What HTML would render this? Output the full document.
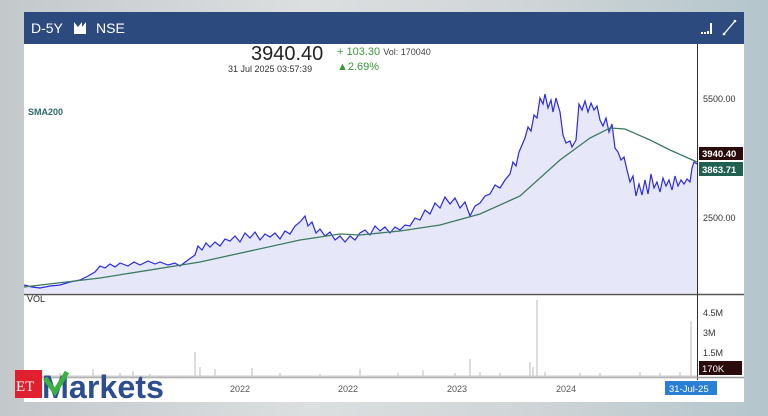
<!DOCTYPE html>
<html><head><style>
body{margin:0;width:768px;height:416px;overflow:hidden;background:linear-gradient(90deg,#c3c8cb,#dcdfe0 40%,#cfd4d6 70%,#b3c6cc);font-family:"Liberation Sans",sans-serif;position:relative}
.panel{position:absolute;left:24px;top:12px;width:720px;height:390px;background:#fff}
.hdr{position:absolute;left:0;top:0;width:720px;height:32px;background:#2c4a7e;color:#fff;font-size:14px}
.t{position:absolute;white-space:nowrap}
</style></head><body>
<div class="panel">
<div class="hdr">
<span class="t" style="left:7px;top:8px">D-5Y</span>
<svg class="t" style="left:49px;top:9px" width="14" height="14"><path d="M1 13V1l4 5 4-5v5l4-5v12z" fill="#fff"/></svg>
<span class="t" style="left:72px;top:8px">NSE</span>
<svg class="t" style="left:675px;top:8px" width="16" height="16"><rect x="2" y="12" width="2" height="2" fill="#fff"/><rect x="5" y="12" width="2" height="2" fill="#fff"/><rect x="8" y="11" width="2" height="3" fill="#fff"/><rect x="11" y="3" width="2" height="11" fill="#fff"/></svg>
<svg class="t" style="left:698px;top:6px" width="16" height="18"><path d="M2 16L13 3" stroke="#fff" stroke-width="1.3"/><circle cx="2" cy="16" r="1.3" fill="#fff"/><circle cx="13" cy="3" r="1.3" fill="#fff"/></svg>
</div>
<span class="t" style="left:227px;top:31px;font-size:20px;color:#222">3940.40</span>
<span class="t" style="left:204px;top:52px;font-size:9px;color:#333">31 Jul 2025 03:57:39</span>
<span class="t" style="left:313px;top:34px;font-size:11px;color:#3a9a3a">+ 103.30 <span style="color:#444;font-size:9px">Vol: 170040</span></span>
<span class="t" style="left:313px;top:49px;font-size:11px;color:#3a9a3a">▲2.69%</span>
<span class="t" style="left:4px;top:95px;font-size:9px;color:#2a6a6a;font-weight:bold">SMA200</span>
<span class="t" style="left:3px;top:282px;font-size:9px;color:#222">VOL</span>
</div>
<svg style="position:absolute;left:0;top:0" width="768" height="416">
<defs><polyline id="pl" points="24,285 32,287 40,288 50,286 60,285 70,282 80,280 88,276 95,272 100,266 105,268 110,264 115,267 120,263 128,266 134,262 140,265 148,261 155,264 160,262 168,265 175,263 180,266 188,260 195,255 198,246 202,250 206,243 210,247 215,242 220,246 225,239 230,241 235,236 240,242 245,233 250,238 255,232 260,240 265,234 270,237 275,233 280,239 285,231 290,234 295,226 300,222 305,216 308,226 312,222 316,233 320,229 325,236 330,232 335,240 340,236 345,242 350,236 355,240 360,233 365,230 370,235 375,226 380,231 385,227 390,233 395,227 400,230 405,225 410,226 415,218 420,220 425,210 430,214 435,203 440,208 445,197 450,204 455,198 460,208 465,202 470,216 475,206 480,203 485,196 490,194 495,185 500,188 505,180 510,174 513,162 516,166 519,152 522,145 525,138 528,127 531,131 534,115 537,118 540,98 543,104 545,94 548,108 551,100 553,112 556,98 560,112 563,135 566,143 570,141 572,147 576,140 579,104 582,110 585,101 588,112 591,103 594,110 597,106 600,120 603,126 606,118 609,132 612,124 615,148 618,152 621,160 624,157 627,170 630,182 633,176 636,196 639,184 642,195 645,180 648,194 651,174 654,188 657,182 660,192 663,178 666,186 669,180 672,190 675,176 678,186 681,180 684,184 687,179 690,182 692,168 694,162 697,164"/></defs>
<polygon fill="#e6e7f8" points="24,285 32,287 40,288 50,286 60,285 70,282 80,280 88,276 95,272 100,266 105,268 110,264 115,267 120,263 128,266 134,262 140,265 148,261 155,264 160,262 168,265 175,263 180,266 188,260 195,255 198,246 202,250 206,243 210,247 215,242 220,246 225,239 230,241 235,236 240,242 245,233 250,238 255,232 260,240 265,234 270,237 275,233 280,239 285,231 290,234 295,226 300,222 305,216 308,226 312,222 316,233 320,229 325,236 330,232 335,240 340,236 345,242 350,236 355,240 360,233 365,230 370,235 375,226 380,231 385,227 390,233 395,227 400,230 405,225 410,226 415,218 420,220 425,210 430,214 435,203 440,208 445,197 450,204 455,198 460,208 465,202 470,216 475,206 480,203 485,196 490,194 495,185 500,188 505,180 510,174 513,162 516,166 519,152 522,145 525,138 528,127 531,131 534,115 537,118 540,98 543,104 545,94 548,108 551,100 553,112 556,98 560,112 563,135 566,143 570,141 572,147 576,140 579,104 582,110 585,101 588,112 591,103 594,110 597,106 600,120 603,126 606,118 609,132 612,124 615,148 618,152 621,160 624,157 627,170 630,182 633,176 636,196 639,184 642,195 645,180 648,194 651,174 654,188 657,182 660,192 663,178 666,186 669,180 672,190 675,176 678,186 681,180 684,184 687,179 690,182 692,168 694,162 697,164 697,293 24,293"/>
<use href="#pl" fill="none" stroke="#2a2ae8" stroke-width="1.2"/>
<polyline fill="none" stroke="#3c7a60" stroke-width="1.3" points="24,287 100,278 200,262 300,240 340,234 360,235 400,231 440,225 480,214 520,196 560,160 590,138 610,128 625,129 650,140 670,150 697,162"/>
<line x1="24" y1="294.5" x2="744" y2="294.5" stroke="#555" stroke-width="1.5"/>
<line x1="697.5" y1="44" x2="697.5" y2="380" stroke="#333"/>
<line x1="24" y1="377.5" x2="744" y2="377.5" stroke="#999" stroke-width="1.5"/>
<g stroke="#bbb" stroke-width="1">
<path d="M30 377v-3M60 377v-4M93 377v-8M120 377v-4M133 377v-6M150 377v-3M195 377v-25M200 377v-10M215 377v-8M252 377v-9M280 377v-4M320 377v-3M360 377v-8M398 377v-4M423 377v-7M455 377v-4M470 377v-18M480 377v-5M500 377v-4M530 377v-15M533 377v-10M537 377v-77M545 377v-5M580 377v-4M600 377v-4M640 377v-5M660 377v-4M680 377v-5M691 377v-56"/>
<path d="M24 376.5H697" stroke="#ccc" stroke-width="2"/>
</g>
<g font-size="9" fill="#333" font-family="Liberation Sans">
<text x="703" y="102">5500.00</text><text x="703" y="221">2500.00</text>
<text x="703" y="316">4.5M</text><text x="703" y="336">3M</text><text x="703" y="356">1.5M</text>
<text x="230" y="392" fill="#555">2022</text><text x="338" y="392" fill="#555">2022</text><text x="447" y="392" fill="#555">2023</text><text x="556" y="392" fill="#555">2024</text>
</g>
<rect x="699" y="147" width="44" height="13" fill="#2a0a0a"/><text x="702" y="157" font-size="9.5" fill="#fff" font-weight="bold" font-family="Liberation Sans">3940.40</text>
<rect x="699" y="162" width="44" height="14" fill="#1f6050"/><text x="702" y="173" font-size="9.5" fill="#fff" font-weight="bold" font-family="Liberation Sans">3863.71</text>
<rect x="699" y="361" width="43" height="14" fill="#2a0a0a"/><text x="702" y="372" font-size="9.5" fill="#fff" font-family="Liberation Sans">170K</text>
<rect x="665" y="381" width="52" height="14" fill="#2a7fd4"/><text x="669" y="392" font-size="9.5" fill="#fff" font-family="Liberation Sans">31-Jul-25</text>
<rect x="15" y="370" width="27" height="28" fill="#e0202e"/><text x="16" y="391" font-size="15" fill="#fff" font-family="Liberation Serif">ET</text>
<text x="42" y="398" font-size="32" font-weight="bold" fill="#2d4d8e" font-family="Liberation Sans" textLength="122" lengthAdjust="spacingAndGlyphs">Markets</text>
<path d="M45 378l10 14 12-20" fill="none" stroke="#3cb043" stroke-width="5"/>
</svg>
</body></html>
